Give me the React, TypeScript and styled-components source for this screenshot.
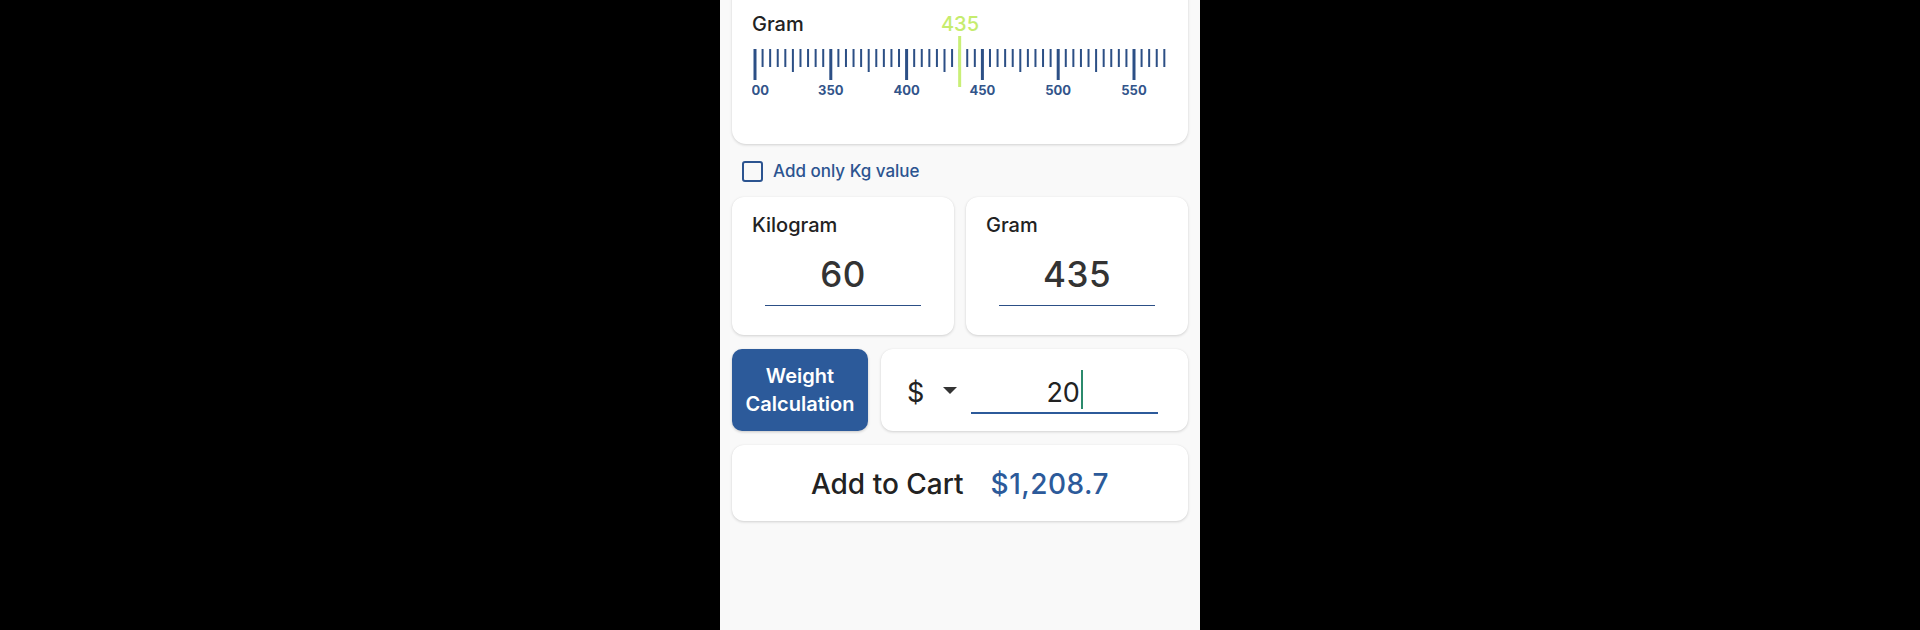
import React from "react";
import styled, { createGlobalStyle } from "styled-components";

const BLUE = "#2c5a9a";
const TICK = "#2c4f85";
const FONT = `Inter, Roboto, "Noto Sans", sans-serif`;

const GlobalStyle = createGlobalStyle`
    html, body {
        margin: 0;
        padding: 0;
        background: #000;
        font-family: ${FONT};
    }
`;

// ruler: 300..570 in steps of 5, 7.58px per step
const STEP = 7.58;
const START = 300;
const RULER_W = 416;
const ticks = Array.from({ length: 55 }, (_, i) => START + i * 5);
const tickX = (v: number) => 3 + ((v - START) / 5) * STEP;

const Ruler = ({ value }: { value: number }) => (
    <svg width={RULER_W} height={66} style={{ display: "block", overflow: "hidden" }}>
        {ticks.map((v) => {
            const major = v % 50 === 0;
            const medium = !major && v % 25 === 0;
            const bottom = major ? 44 : medium ? 36 : 31;
            return (
                <rect
                    key={v}
                    x={tickX(v) - (major ? 1.5 : 1)}
                    y={13}
                    width={major ? 3 : 2}
                    height={bottom - 13}
                    fill={TICK}
                />
            );
        })}
        {ticks
            .filter((v) => v % 50 === 0)
            .map((v) => (
                <text
                    key={v}
                    x={tickX(v) + (v === START ? 1 : 0)}
                    y={59}
                    textAnchor="middle"
                    fontSize={13}
                    fontWeight={700}
                    fill="#32548a"
                    fontFamily={FONT}
                >
                    {v}
                </text>
            ))}
        <rect x={tickX(value) - 1.5} y={0} width={3} height={51} fill="#c9ef77" />
    </svg>
);

const App = () => {
    return (
        <>
            <GlobalStyle />
            <Screen>
                <Column>
                    <RulerCard>
                        <RulerHeader>
                            <Label>Gram</Label>
                            <Pointer>435</Pointer>
                            <span />
                        </RulerHeader>
                        <Ruler value={435} />
                    </RulerCard>

                    <CheckRow>
                        <Checkbox />
                        <CheckLabel>Add only Kg value</CheckLabel>
                    </CheckRow>

                    <UnitGrid>
                        <UnitCard>
                            <Label>Kilogram</Label>
                            <UnitValue>60</UnitValue>
                        </UnitCard>
                        <UnitCard>
                            <Label>Gram</Label>
                            <UnitValue>435</UnitValue>
                        </UnitCard>
                    </UnitGrid>

                    <PriceRow>
                        <CalcButton>
                            Weight
                            <br />
                            Calculation
                        </CalcButton>
                        <PriceCard>
                            <Currency>
                                <span>$</span>
                                <svg width="14" height="8" viewBox="0 0 14 8">
                                    <polygon points="0,0 14,0 7,7" fill="#333" />
                                </svg>
                            </Currency>
                            <PriceInput>
                                20
                                <Caret />
                            </PriceInput>
                        </PriceCard>
                    </PriceRow>

                    <CartCard>
                        <CartText>Add to Cart</CartText>
                        <CartTotal>$1,208.7</CartTotal>
                    </CartCard>
                </Column>
            </Screen>
        </>
    );
};

export default App;

const Screen = styled.div`
    width: 100%;
    height: 630px;
    display: flex;
    justify-content: center;
    overflow: hidden;
`;

const Column = styled.div`
    width: 480px;
    height: 630px;
    box-sizing: border-box;
    background: #f9f9f9;
    padding: 0 12px;
    display: flex;
    flex-direction: column;
    overflow: hidden;
`;

const Card = styled.div`
    background: #fff;
    border-radius: 12px;
    box-shadow: 0 1px 3px rgba(0, 0, 0, 0.16), 0 0 1px rgba(0, 0, 0, 0.06);
    box-sizing: border-box;
`;

const RulerCard = styled(Card)`
    margin-top: -20px;
    height: 164px;
    padding: 32px 20px 0;
    border-radius: 14px;
`;

const RulerHeader = styled.div`
    display: grid;
    grid-template-columns: 1fr auto 1fr;
    align-items: baseline;
    height: 24px;
`;

const Label = styled.div`
    font-size: 20px;
    line-height: 24px;
    font-weight: 500;
    color: #222;
`;

const Pointer = styled.div`
    font-size: 20px;
    line-height: 24px;
    font-weight: 500;
    color: #c6ec6e;
`;

const CheckRow = styled.div`
    display: flex;
    align-items: center;
    gap: 10px;
    padding: 0 10px;
    margin-top: 16px;
    height: 22px;
`;

const Checkbox = styled.div`
    width: 21px;
    height: 21px;
    box-sizing: border-box;
    border: 2px solid #2c5490;
    border-radius: 3px;
`;

const CheckLabel = styled.span`
    font-size: 17px;
    line-height: 22px;
    font-weight: 500;
    color: #2c5490;
`;

const UnitGrid = styled.div`
    display: grid;
    grid-template-columns: 1fr 1fr;
    gap: 12px;
    margin-top: 15px;
`;

const UnitCard = styled(Card)`
    height: 138px;
    padding: 16px 20px 0;
`;

const UnitValue = styled.div`
    margin: 15px 13px 0;
    padding-bottom: 9px;
    border-bottom: 1.5px solid #2c4f86;
    text-align: center;
    font-size: 35px;
    line-height: 44px;
    font-weight: 500;
    letter-spacing: 0.5px;
    color: #333;
`;

const PriceRow = styled.div`
    display: grid;
    grid-template-columns: 136px 1fr;
    gap: 13px;
    margin-top: 14px;
    height: 82px;
`;

const CalcButton = styled.button`
    border: none;
    border-radius: 10px;
    background: ${BLUE};
    color: #fff;
    font-family: ${FONT};
    font-size: 20px;
    line-height: 28px;
    font-weight: 600;
    padding: 0;
    box-shadow: 0 1px 3px rgba(0, 0, 0, 0.2);
`;

const PriceCard = styled(Card)`
    display: flex;
    align-items: center;
    padding: 5px 30px 0 26px;
`;

const Currency = styled.div`
    display: flex;
    align-items: center;
    gap: 19px;
    font-size: 27px;
    line-height: 34px;
    color: #222;

    svg {
        margin-bottom: 4px;
    }
`;

const PriceInput = styled.div`
    flex: 1;
    margin-left: 14px;
    padding: 4px 0 2px;
    border-bottom: 2px solid ${BLUE};
    text-align: center;
    font-size: 27px;
    line-height: 34px;
    color: #222;
`;

const Caret = styled.span`
    display: inline-block;
    width: 2px;
    height: 39px;
    margin: -8px 0 0 1px;
    vertical-align: -7px;
    background: #2b8a6c;
`;

const CartCard = styled(Card)`
    margin-top: 14px;
    height: 76px;
    padding-top: 2px;
    display: flex;
    align-items: center;
    justify-content: center;
    gap: 27px;
    font-size: 28px;
    line-height: 30px;
    font-weight: 500;
`;

const CartText = styled.span`
    color: #222;
`;

const CartTotal = styled.span`
    color: ${BLUE};
    letter-spacing: 0.5px;
`;
